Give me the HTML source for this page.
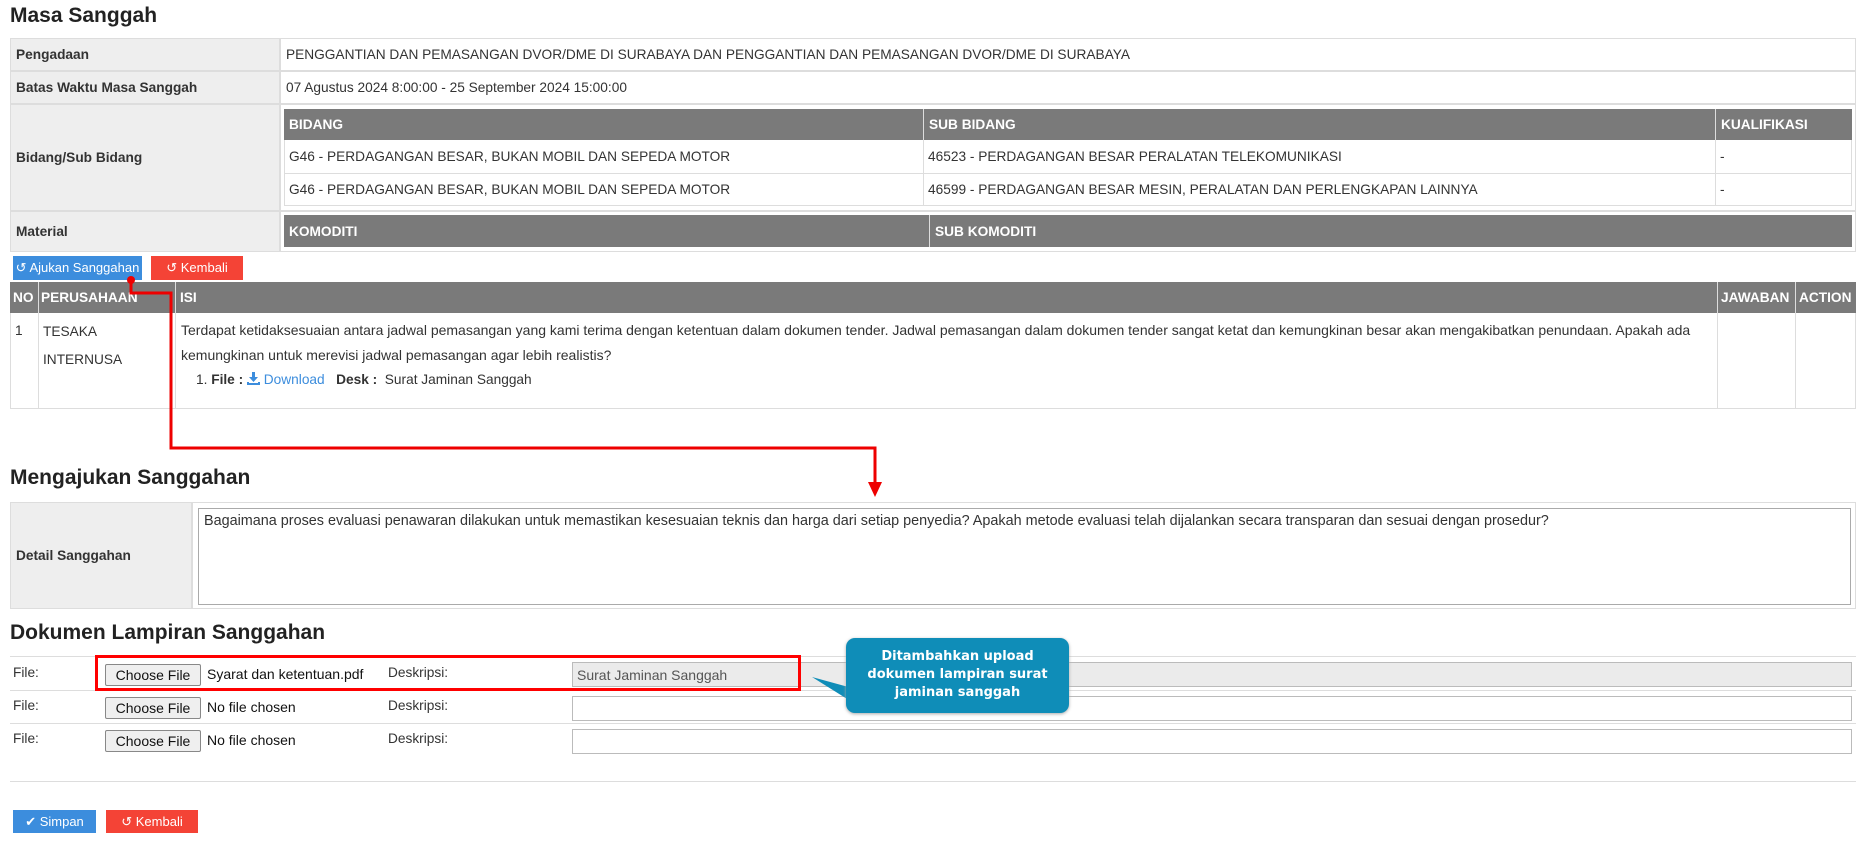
<!DOCTYPE html>
<html><head><meta charset="utf-8"><style>
*{box-sizing:border-box;margin:0;padding:0}
body{width:1866px;height:849px;background:#fff;font-family:"Liberation Sans",Arial,sans-serif;font-size:13.7px;color:#333;position:relative;overflow:hidden}
.a{position:absolute}
h1{position:absolute;font-size:21px;font-weight:bold;color:#222}
.lab{background:#eee;font-weight:bold;display:flex;align-items:center;padding-left:5px;border:1px solid #ddd}
.cell{display:flex;align-items:center;padding-left:5px}
.hd{background:#7a7a7a;color:#fff;font-weight:bold}
.bt{position:absolute;color:#fff;font-size:13px;display:flex;align-items:center;justify-content:center}
.blue{background:#3c8ddd}.red{background:#f44336}
.cf{position:absolute;width:96px;height:22px;border:1px solid #888;border-radius:2px;background:#efefef;font-size:14px;display:flex;align-items:center;justify-content:center;color:#111}
.inp{position:absolute;border:1px solid #bbb;height:25px}
</style></head><body>
<h1 style="left:10px;top:4px">Masa Sanggah</h1>
<div class="a" style="left:10px;top:38px;width:1846px;height:214px;border:1px solid #ddd"></div>
<div class="a lab" style="left:10px;top:38px;width:270px;height:33px">Pengadaan</div>
<div class="a cell" style="left:280px;top:38px;width:1576px;height:33px;border:1px solid #ddd">PENGGANTIAN DAN PEMASANGAN DVOR/DME DI SURABAYA DAN PENGGANTIAN DAN PEMASANGAN DVOR/DME DI SURABAYA</div>
<div class="a lab" style="left:10px;top:71px;width:270px;height:33px">Batas Waktu Masa Sanggah</div>
<div class="a cell" style="left:280px;top:71px;width:1576px;height:33px;border:1px solid #ddd">07 Agustus 2024 8:00:00 - 25 September 2024 15:00:00</div>
<div class="a lab" style="left:10px;top:104px;width:270px;height:107px">Bidang/Sub Bidang</div>
<div class="a" style="left:280px;top:104px;width:1576px;height:107px;border:1px solid #ddd"></div>
<div class="a cell hd" style="left:284px;top:109px;width:639px;height:31px">BIDANG</div>
<div class="a cell hd" style="left:923px;top:109px;width:792px;height:31px;border-left:1px solid #ddd">SUB BIDANG</div>
<div class="a cell hd" style="left:1715px;top:109px;width:137px;height:31px;border-left:1px solid #ddd">KUALIFIKASI</div>
<div class="a" style="left:284px;top:140px;width:1568px;height:66px;border:1px solid #ddd;border-top:0"></div>
<div class="a" style="left:284px;top:173px;width:1568px;border-top:1px solid #ddd"></div>
<div class="a" style="left:923px;top:140px;height:66px;border-left:1px solid #ddd"></div>
<div class="a" style="left:1715px;top:140px;height:66px;border-left:1px solid #ddd"></div>
<div class="a cell" style="left:284px;top:140px;height:33px">G46 - PERDAGANGAN BESAR, BUKAN MOBIL DAN SEPEDA MOTOR</div>
<div class="a cell" style="left:923px;top:140px;height:33px">46523 - PERDAGANGAN BESAR PERALATAN TELEKOMUNIKASI</div>
<div class="a cell" style="left:1715px;top:140px;height:33px">-</div>
<div class="a cell" style="left:284px;top:173px;height:33px">G46 - PERDAGANGAN BESAR, BUKAN MOBIL DAN SEPEDA MOTOR</div>
<div class="a cell" style="left:923px;top:173px;height:33px">46599 - PERDAGANGAN BESAR MESIN, PERALATAN DAN PERLENGKAPAN LAINNYA</div>
<div class="a cell" style="left:1715px;top:173px;height:33px">-</div>
<div class="a lab" style="left:10px;top:211px;width:270px;height:41px">Material</div>
<div class="a" style="left:280px;top:211px;width:1576px;height:41px;border:1px solid #ddd"></div>
<div class="a cell hd" style="left:284px;top:215px;width:645px;height:32px">KOMODITI</div>
<div class="a cell hd" style="left:929px;top:215px;width:923px;height:32px;border-left:1px solid #ddd">SUB KOMODITI</div>
<div class="bt blue" style="left:13px;top:256px;width:129px;height:24px">↺ Ajukan Sanggahan</div>
<div class="bt red" style="left:151px;top:256px;width:92px;height:24px">↺ Kembali</div>
<div class="a" style="left:10px;top:282px;width:1846px;height:127px;border:1px solid #ddd"></div>
<div class="a hd" style="left:10px;top:282px;width:1846px;height:31px"></div>
<div class="a cell hd" style="left:10px;top:282px;height:31px;padding-left:3px">NO</div>
<div class="a cell hd" style="left:38px;top:282px;height:31px;padding-left:3px">PERUSAHAAN</div>
<div class="a cell hd" style="left:175px;top:282px;height:31px">ISI</div>
<div class="a cell hd" style="left:1717px;top:282px;height:31px;padding-left:4px">JAWABAN</div>
<div class="a cell hd" style="left:1795px;top:282px;height:31px;padding-left:4px">ACTION</div>
<div class="a" style="left:38px;top:282px;height:127px;border-left:1px solid #ddd"></div>
<div class="a" style="left:175px;top:282px;height:127px;border-left:1px solid #ddd"></div>
<div class="a" style="left:1717px;top:282px;height:127px;border-left:1px solid #ddd"></div>
<div class="a" style="left:1795px;top:282px;height:127px;border-left:1px solid #ddd"></div>
<div class="a" style="left:15px;top:318px;line-height:25px">1</div>
<div class="a" style="left:43px;top:318px;line-height:28px">TESAKA<br>INTERNUSA</div>
<div class="a" style="left:181px;top:318px;line-height:25px;width:1530px;font-size:14px">Terdapat ketidaksesuaian antara jadwal pemasangan yang kami terima dengan ketentuan dalam dokumen tender. Jadwal pemasangan dalam dokumen tender sangat ketat dan kemungkinan besar akan mengakibatkan penundaan. Apakah ada kemungkinan untuk merevisi jadwal pemasangan agar lebih realistis?</div>
<div class="a" style="left:196px;top:370px;line-height:20px">1. <b>File :</b> <span style="color:#3c8ddd"><svg width="13" height="13" viewBox="0 0 13 13" style="vertical-align:-1px"><path d="M5 0h3v5h3l-4.5 5L2 5h3z M0 10h2v1h9v-1h2v3H0z" fill="#3c8ddd"/></svg> Download</span> &nbsp; <b>Desk :</b>&nbsp; Surat Jaminan Sanggah</div>
<svg class="a" style="left:0;top:0" width="1866" height="849">
<circle cx="131" cy="280" r="4" fill="#e00"/>
<polyline points="131,280 131,293 171,293 171,448 875,448 875,484" fill="none" stroke="#e00" stroke-width="3"/>
<polygon points="868,482 882,482 875,497" fill="#e00"/>
</svg>
<h1 style="left:10px;top:466px">Mengajukan Sanggahan</h1>
<div class="a lab" style="left:10px;top:502px;width:182px;height:107px">Detail Sanggahan</div>
<div class="a" style="left:192px;top:502px;width:1664px;height:107px;border:1px solid #ddd"></div>
<div class="a" style="left:198px;top:508px;width:1653px;height:97px;border:1px solid #aaa;padding:4px 5px;font-size:14.4px">Bagaimana proses evaluasi penawaran dilakukan untuk memastikan kesesuaian teknis dan harga dari setiap penyedia? Apakah metode evaluasi telah dijalankan secara transparan dan sesuai dengan prosedur?</div>
<h1 style="left:10px;top:621px">Dokumen Lampiran Sanggahan</h1>
<div class="a" style="left:10px;top:656px;width:1846px;border-top:1px solid #ddd"></div>
<div class="a" style="left:10px;top:690px;width:1846px;border-top:1px solid #ddd"></div>
<div class="a" style="left:10px;top:723px;width:1846px;border-top:1px solid #ddd"></div>
<div class="a" style="left:10px;top:781px;width:1846px;border-top:1px solid #ddd"></div>
<div class="a" style="left:13px;top:665px">File:</div>
<div class="a" style="left:13px;top:698px">File:</div>
<div class="a" style="left:13px;top:731px">File:</div>
<div class="cf" style="left:105px;top:664px">Choose File</div>
<div class="cf" style="left:105px;top:697px">Choose File</div>
<div class="cf" style="left:105px;top:730px">Choose File</div>
<div class="a" style="left:207px;top:666px;font-size:14px;color:#111">Syarat dan ketentuan.pdf</div>
<div class="a" style="left:207px;top:699px;font-size:14px;color:#111">No file chosen</div>
<div class="a" style="left:207px;top:732px;font-size:14px;color:#111">No file chosen</div>
<div class="a" style="left:388px;top:665px">Deskripsi:</div>
<div class="a" style="left:388px;top:698px">Deskripsi:</div>
<div class="a" style="left:388px;top:731px">Deskripsi:</div>
<div class="inp" style="left:572px;top:662px;width:1280px;background:#ebebeb;padding:4px;font-size:14px;color:#555">Surat Jaminan Sanggah</div>
<div class="inp" style="left:572px;top:696px;width:1280px"></div>
<div class="inp" style="left:572px;top:729px;width:1280px"></div>
<div class="a" style="left:95px;top:655px;width:706px;height:36px;border:3px solid #f00"></div>
<svg class="a" style="left:800px;top:630px" width="60" height="80"><polygon points="12,47 52,58 52,72" fill="#0f8db8"/></svg>
<div class="a" style="left:846px;top:638px;width:223px;height:75px;background:#0f8db8;border-radius:9px;color:#fff;font-family:'DejaVu Sans',sans-serif;font-weight:bold;font-size:13px;line-height:18px;text-align:center;padding-top:10px;box-shadow:0 1px 3px #aaa">Ditambahkan upload<br>dokumen lampiran surat<br>jaminan sanggah</div>
<div class="bt blue" style="left:13px;top:810px;width:83px;height:23px">✔ Simpan</div>
<div class="bt red" style="left:106px;top:810px;width:92px;height:23px">↺ Kembali</div>
</body></html>
